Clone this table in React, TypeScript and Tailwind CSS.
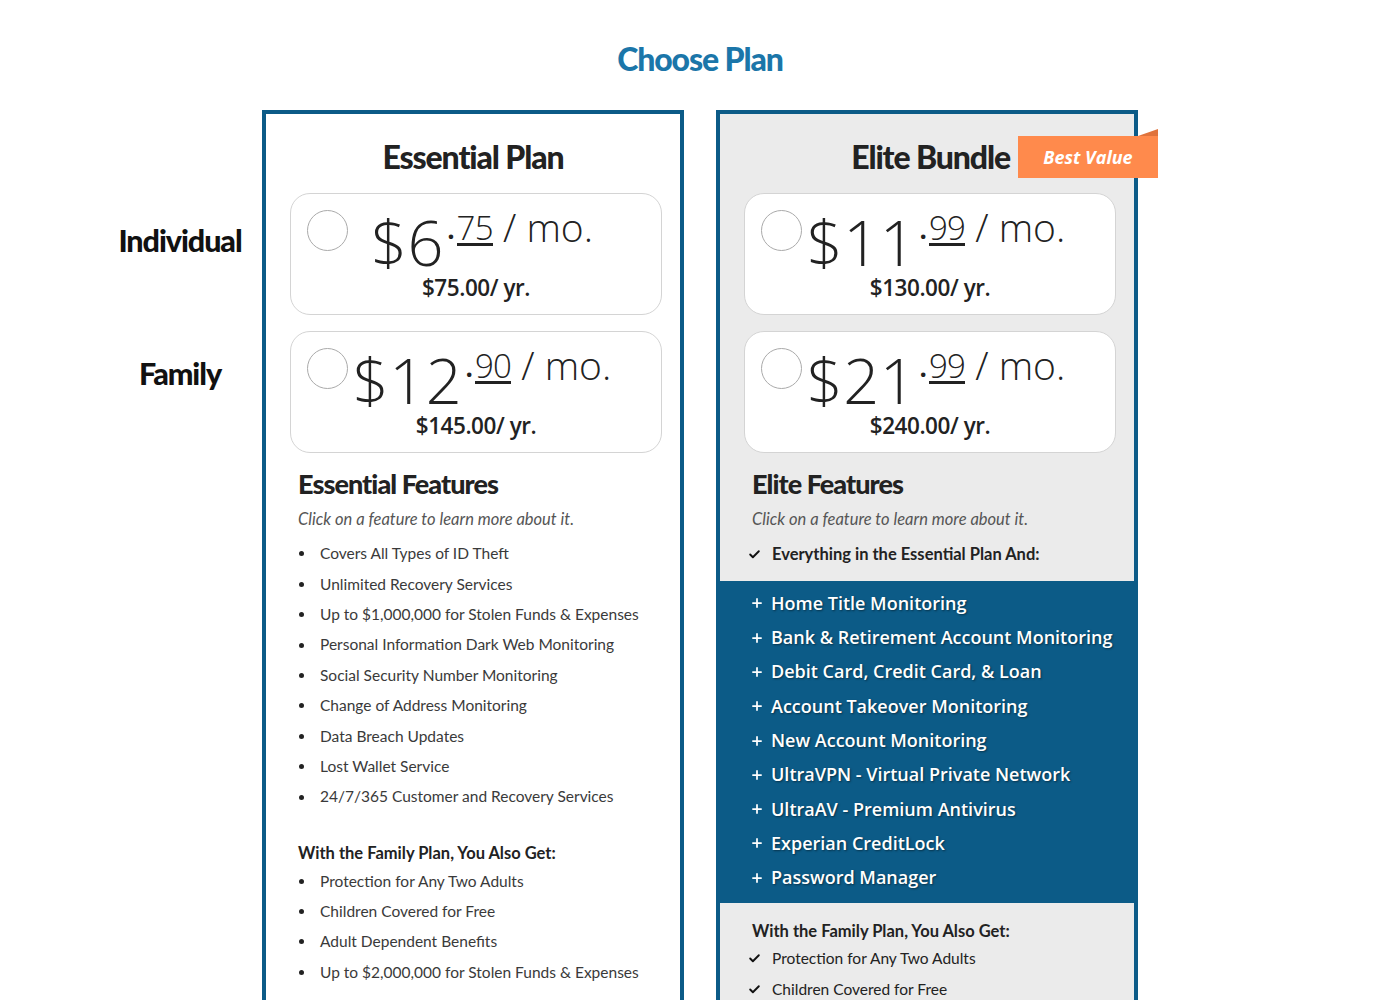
import { Check, Plus } from "lucide-react";

const headFont = "font-['Lato',sans-serif] font-black tracking-[-0.035em]";
const body = "font-['Lato',sans-serif]";
const open = "font-['Open_Sans',sans-serif]";

const essentialFeatures = [
  "Covers All Types of ID Theft",
  "Unlimited Recovery Services",
  "Up to $1,000,000 for Stolen Funds & Expenses",
  "Personal Information Dark Web Monitoring",
  "Social Security Number Monitoring",
  "Change of Address Monitoring",
  "Data Breach Updates",
  "Lost Wallet Service",
  "24/7/365 Customer and Recovery Services",
];

const familyExtras = [
  "Protection for Any Two Adults",
  "Children Covered for Free",
  "Adult Dependent Benefits",
  "Up to $2,000,000 for Stolen Funds & Expenses",
];

const eliteFeatures = [
  "Home Title Monitoring",
  "Bank & Retirement Account Monitoring",
  "Debit Card, Credit Card, & Loan",
  "Account Takeover Monitoring",
  "New Account Monitoring",
  "UltraVPN - Virtual Private Network",
  "UltraAV - Premium Antivirus",
  "Experian CreditLock",
  "Password Manager",
];

function PriceBox({ dollars, cents, yearly }: { dollars: string; cents: string; yearly: string }) {
  return (
    <div className="relative w-[372px] h-[122px] rounded-[20px] border border-[#d4d4d4] bg-white">
      <div className="absolute left-4 top-4 w-[41px] h-[41px] rounded-full border border-[#aaa] bg-white" />
      <div className={`${open} flex items-start justify-center pl-3 pt-[17px] text-[#222] font-light`}>
        <span className="text-[63px] leading-[62px] tracking-[0.01em]">{dollars}</span>
        <span className="flex items-end ml-[3px] mt-[2px] text-[33px] leading-[30px]">
          <span className="font-bold text-[26px] leading-[26px] mb-[4px] mr-[2px]">.</span>
          <span className="border-b-[3px] border-[#222] tracking-[-0.02em]">{cents}</span>
        </span>
        <span className="text-[39px] leading-[40px] ml-[10px] mt-[-4px]">/ mo.</span>
      </div>
      <div className={`${open} text-center text-[22.5px] font-semibold text-[#222] mt-[-2px] tracking-[-0.02em]`}>{yearly}</div>
    </div>
  );
}

function Bullet({ text }: { text: string }) {
  return (
    <li className="flex items-center h-[30.4px]">
      <span className="w-[5px] h-[5px] rounded-full bg-[#222] ml-[1px] mr-[16px]" />
      <span className={`${body} text-[15.5px] text-[#3a3a3a]`}>{text}</span>
    </li>
  );
}

function CheckItem({ text, bold }: { text: string; bold?: boolean }) {
  return (
    <li className="flex items-center h-[30.5px]">
      <Check className="w-[13px] h-[13px] mr-[11px] text-[#111]" strokeWidth={3.5} />
      <span className={`${body} text-[#222] ${bold ? "font-bold text-[16.5px]" : "text-[15.5px] text-[#3a3a3a]"}`}>{text}</span>
    </li>
  );
}

export default function App() {
  return (
    <div className="w-[1400px] h-[1000px] overflow-hidden bg-white">
      <h1 className={`${headFont} text-center text-[#1b76a9] text-[32px] pt-[38px] leading-[42px]`}>Choose Plan</h1>

      <div className="flex mt-[30px] pl-[98px]">
        <div className="w-[164px] text-center text-[#111]">
          <div className={`${headFont} text-[30.5px] mt-[110px] leading-[40px]`}>Individual</div>
          <div className={`${headFont} text-[30.5px] mt-[93px] leading-[40px]`}>Family</div>
        </div>

        <div className="flex gap-8">
          <div className="w-[422px] h-[900px] border-4 border-[#0c5b87] bg-white">
            <h2 className={`${headFont} text-[#222] text-[32px] text-center mt-[24px] leading-[38px]`}>Essential Plan</h2>
            <div className="ml-6 mt-[17px] flex flex-col gap-4">
              <PriceBox dollars="$6" cents="75" yearly="$75.00/ yr." />
              <PriceBox dollars="$12" cents="90" yearly="$145.00/ yr." />
            </div>
            <div className="pl-[32px] pr-4">
              <h3 className={`${headFont} tracking-[-0.02em] text-[#222] text-[27px] mt-[15px] leading-[32px]`}>Essential Features</h3>
              <p className={`${body} italic text-[16.5px] text-[#555] mt-[7px]`}>Click on a feature to learn more about it.</p>
              <ul className="mt-[7px]">
                {essentialFeatures.map((f) => (
                  <Bullet key={f} text={f} />
                ))}
              </ul>
              <p className={`${body} font-bold text-[16.5px] text-[#222] mt-[29px]`}>With the Family Plan, You Also Get:</p>
              <ul className="mt-0">
                {familyExtras.map((f) => (
                  <Bullet key={f} text={f} />
                ))}
              </ul>
            </div>
          </div>

          <div className="relative w-[422px] h-[900px] border-4 border-[#0c5b87] bg-[#ebebeb]">
            <div className="flex items-center justify-end mt-[22px] h-[42px]">
              <h2 className={`${headFont} text-[#222] text-[32px] leading-[38px] mr-2`}>Elite Bundle</h2>
              <div className="relative mr-[-24px] w-[140px] h-[42px] bg-[#ff8a4c] flex items-center justify-center">
                <span className={`${open} italic font-bold text-white text-[18px]`}>Best Value</span>
                <div className="absolute right-0 top-[-7px] w-0 h-0 border-l-[20px] border-l-transparent border-b-[7px] border-b-[#e0733c]" />
              </div>
            </div>
            <div className="ml-6 mt-[15px] flex flex-col gap-4">
              <PriceBox dollars="$11" cents="99" yearly="$130.00/ yr." />
              <PriceBox dollars="$21" cents="99" yearly="$240.00/ yr." />
            </div>
            <div className="pl-[32px] pr-4">
              <h3 className={`${headFont} tracking-[-0.02em] text-[#222] text-[27px] mt-[15px] leading-[32px]`}>Elite Features</h3>
              <p className={`${body} italic text-[16.5px] text-[#555] mt-[7px]`}>Click on a feature to learn more about it.</p>
              <ul className="mt-[7px] -ml-[4px]">
                <CheckItem text="Everything in the Essential Plan And:" bold />
              </ul>
            </div>
            <ul className="bg-[#0c5b87] mt-[12px] pt-[5px] pb-[8px] pl-[30px]">
              {eliteFeatures.map((f) => (
                <li key={f} className="flex items-center h-[34.3px] text-white [text-shadow:1px_1px_2px_rgba(0,0,0,0.45)]">
                  <Plus className="w-[14px] h-[14px] mr-[7px]" strokeWidth={3} />
                  <span className={`${open} font-semibold text-[18px]`}>{f}</span>
                </li>
              ))}
            </ul>
            <div className="pl-[28px] pt-[16px]">
              <p className={`${body} font-bold text-[16.5px] text-[#222] pl-[4px]`}>With the Family Plan, You Also Get:</p>
              <ul className="mt-0">
                <CheckItem text="Protection for Any Two Adults" />
                <CheckItem text="Children Covered for Free" />
              </ul>
            </div>
          </div>
        </div>
      </div>
    </div>
  );
}
